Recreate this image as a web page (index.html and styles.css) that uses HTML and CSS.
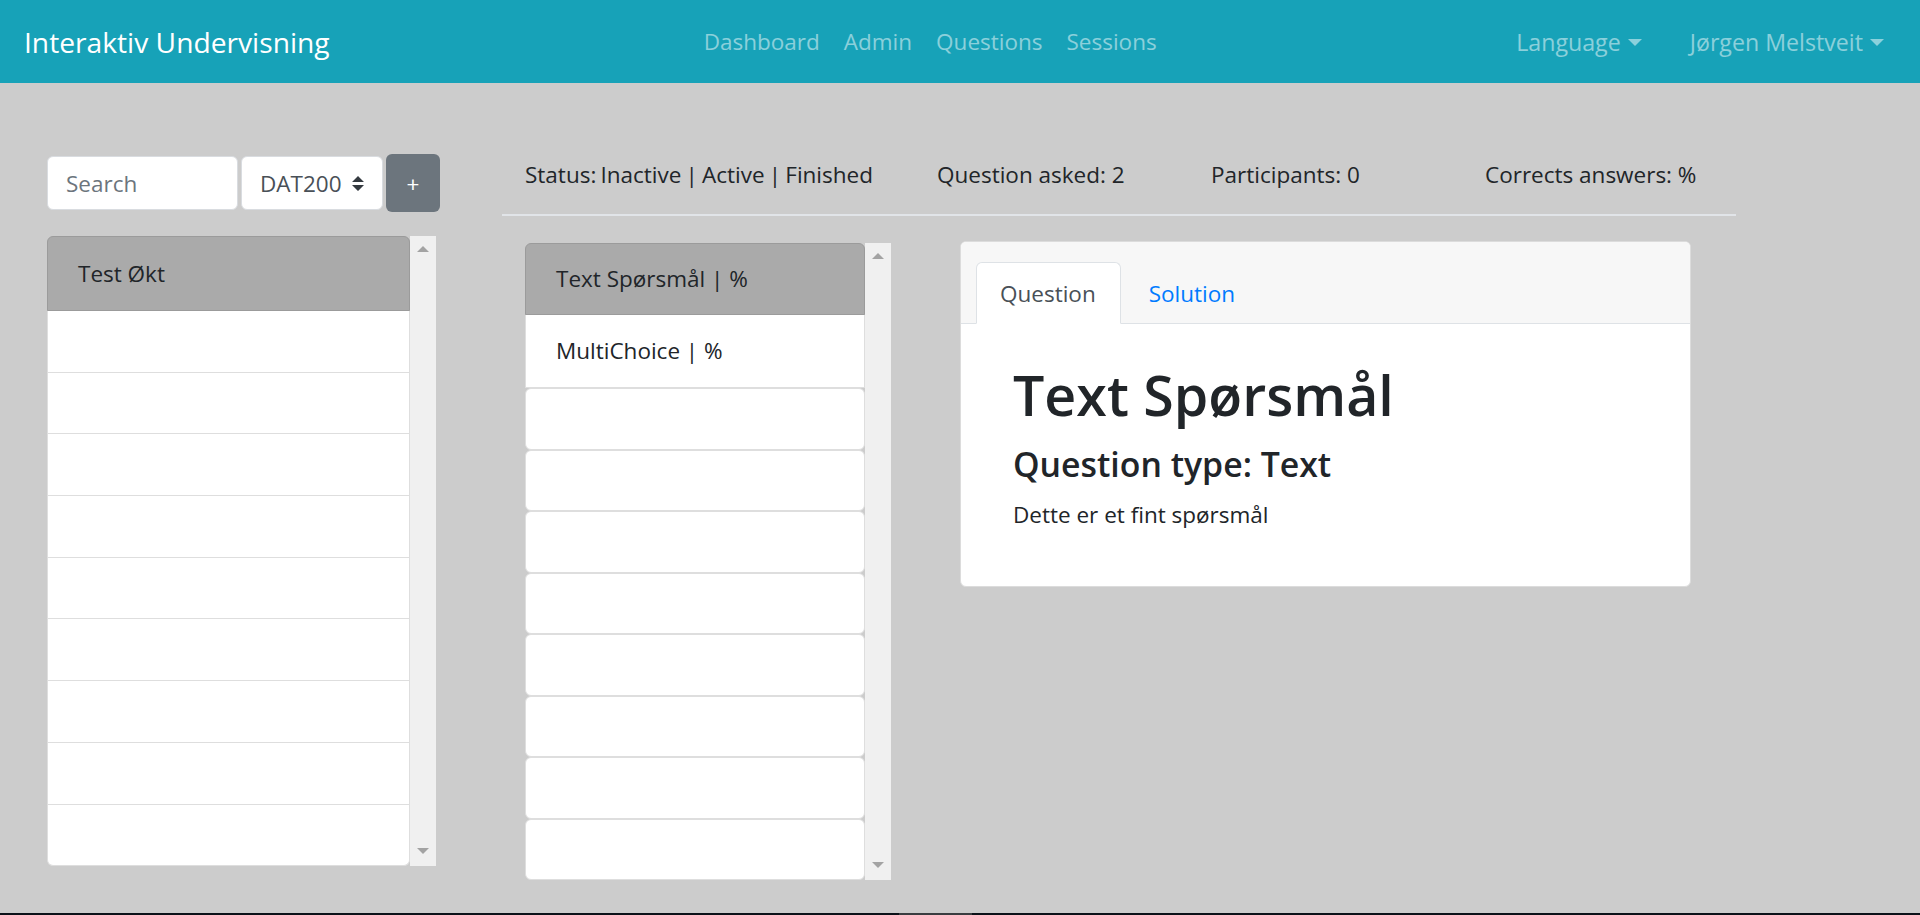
FILE: index.html
```html
<!DOCTYPE html>
<html lang="no">
<head>
<meta charset="utf-8">
<title>Interaktiv Undervisning</title>
<link rel="stylesheet" href="styles.css">
</head>
<body>
<nav class="navbar">
  <a class="brand" href="#">Interaktiv Undervisning</a>
  <ul class="nav nav-center">
    <li><a class="nav-link" href="#">Dashboard</a></li>
    <li><a class="nav-link" href="#">Admin</a></li>
    <li><a class="nav-link" href="#">Questions</a></li>
    <li><a class="nav-link" href="#">Sessions</a></li>
  </ul>
  <ul class="nav nav-right">
    <li><a class="nav-link dropdown" href="#">Language</a></li>
    <li><a class="nav-link dropdown" href="#">Jørgen Melstveit</a></li>
  </ul>
</nav>

<main class="main">
  <section class="sidebar">
    <div class="toolbar">
      <div class="input">Search</div>
      <div class="select">
        <span>DAT200</span>
        <svg class="select-arrow" viewBox="0 0 4 5" width="12" height="15"><path d="M2 0L0 2h4zm0 5L0 3h4z" fill="#343a40"/></svg>
      </div>
      <button class="btn-add">+</button>
    </div>
    <div class="listbox">
      <div class="list">
        <div class="item text active">Test Økt</div>
        <div class="item"></div>
        <div class="item"></div>
        <div class="item"></div>
        <div class="item"></div>
        <div class="item"></div>
        <div class="item"></div>
        <div class="item"></div>
        <div class="item"></div>
        <div class="item last"></div>
      </div>
      <div class="scrollbar">
        <span class="arrow up"></span>
        <span class="arrow down"></span>
      </div>
    </div>
  </section>

  <section class="content">
    <div class="stats">
      <div class="stat s1">Status: Inactive | Active | Finished</div>
      <div class="stat s2">Question asked: 2</div>
      <div class="stat s3">Participants: 0</div>
      <div class="stat s4">Corrects answers: %</div>
    </div>
    <div class="divider"></div>
    <div class="content-row">
      <div class="listbox qlist">
        <div class="list">
          <div class="item text active">Text Spørsmål | %</div>
          <div class="item text">MultiChoice | %</div>
          <div class="item sep"></div>
          <div class="item sep"></div>
          <div class="item sep"></div>
          <div class="item sep"></div>
          <div class="item sep"></div>
          <div class="item sep"></div>
          <div class="item sep"></div>
          <div class="item sep last"></div>
        </div>
        <div class="scrollbar">
          <span class="arrow up"></span>
          <span class="arrow down"></span>
        </div>
      </div>
      <div class="card">
        <div class="card-header">
          <a class="tab active" href="#">Question</a>
          <a class="tab" href="#">Solution</a>
        </div>
        <div class="card-body">
          <h1 class="q-title">Text Spørsmål</h1>
          <h4 class="q-type">Question type: Text</h4>
          <p class="q-text">Dette er et fint spørsmål</p>
        </div>
      </div>
    </div>
  </section>
</main>
<div class="taskbar"><div class="taskbar-thumb"></div></div>
</body>
</html>
```
FILE: styles.css
```css
* { box-sizing: border-box; }
html, body { margin: 0; padding: 0; }
body {
  width: 1920px;
  height: 915px;
  overflow: hidden;
  background: #cccccc;
  font-family: "Open Sans", "Noto Sans", sans-serif;
  font-size: 22.5px;
  color: #212529;
  display: flex;
  flex-direction: column;
}
a { text-decoration: none; }

/* navbar */
.navbar {
  height: 83px;
  flex: none;
  background: #17a2b8;
  display: flex;
  align-items: center;
  padding: 0 24px;
}
.brand {
  color: #fff;
  font-size: 28.2px;
  line-height: 36px;
}
.nav {
  list-style: none;
  margin: 0;
  padding: 0;
  display: flex;
}
.nav-center { margin-left: 362px; }
.nav-right { margin-left: auto; }
.nav-link {
  display: block;
  padding: 12px;
  color: rgba(255, 255, 255, 0.5);
  font-size: 22.5px;
  line-height: 36px;
}
.nav-right .nav-link { font-size: 23.2px; }
.nav-right li + li { margin-left: 24px; }
.dropdown::after {
  content: "";
  display: inline-block;
  margin-left: 7px;
  vertical-align: 5px;
  border-top: 7px solid rgba(255, 255, 255, 0.5);
  border-left: 7px solid transparent;
  border-right: 7px solid transparent;
}

/* main */
.main {
  flex: 1;
  display: flex;
  padding: 71px 0 0 47px;
}
.sidebar {
  width: 393px;
  flex: none;
}
.toolbar {
  display: flex;
  align-items: center;
  height: 58px;
}
.input, .select {
  height: 54px;
  background: #fff;
  border: 1.5px solid #d9dce0;
  border-radius: 6px;
  display: flex;
  align-items: center;
  padding: 0 18px;
  font-size: 22.5px;
}
.input {
  width: 191px;
  color: #6c757d;
}
.select {
  width: 142px;
  margin-left: 3px;
  justify-content: space-between;
  color: #495057;
}
.btn-add {
  width: 54px;
  height: 58px;
  margin-left: 3px;
  background: #6c757d;
  border: none;
  border-radius: 6px;
  color: #fff;
  font-family: inherit;
  font-size: 22.5px;
  padding: 0;
}

.listbox {
  display: flex;
  margin-top: 24px;
  height: 630px;
  width: 389px;
}
.list {
  flex: 1;
  display: flex;
  flex-direction: column;
}
.item {
  height: 61.7px;
  flex: none;
  background: #fff;
  border: 1.5px solid #dedede;
  border-top: none;
}
.item.text {
  height: 75px;
  display: flex;
  align-items: center;
  padding-left: 30px;
  font-size: 22.5px;
}
.item.active {
  background: #aaaaaa;
  border: 1.5px solid #9b9b9b;
  border-radius: 6px 6px 0 0;
}
.item.last { border-radius: 0 0 6px 6px; }
.item.sep {
  height: 61.5px;
  border-top: 1.5px solid #dedede;
  border-radius: 6px;
}
.scrollbar {
  width: 26px;
  flex: none;
  background: #f0f0f0;
  display: flex;
  flex-direction: column;
  justify-content: space-between;
  align-items: center;
  padding: 10px 0 12px;
}
.arrow {
  width: 0;
  height: 0;
  border-left: 6px solid transparent;
  border-right: 6px solid transparent;
}
.arrow.up { border-bottom: 6px solid #a3a3a3; }
.arrow.down { border-top: 6px solid #a3a3a3; }

/* content */
.content {
  margin-left: 62px;
  width: 1234px;
  flex: none;
}
.stats {
  display: flex;
  height: 38px;
  margin-top: 1px;
  align-items: center;
  padding-left: 23px;
  font-size: 22.5px;
}
.stat { white-space: nowrap; }
.s1 { width: 412px; word-spacing: -1.7px; }
.s2 { width: 274px; }
.s3 { width: 274px; }
.divider {
  height: 2px;
  margin-top: 21px;
  background: #e1e4e8;
}
.content-row {
  display: flex;
  align-items: flex-start;
  padding-left: 23px;
  margin-top: 25px;
}
.qlist {
  margin-top: 1.5px;
  width: 366px;
  height: 637px;
}
.qlist .item.text:first-child { height: 72px; }
.qlist .item.text { height: 73.5px; }
.card {
  margin-left: 69px;
  width: 731px;
  background: #fff;
  border: 1.5px solid #dcdcdc;
  border-radius: 6px;
  overflow: hidden;
}
.card-header {
  background: #f7f7f7;
  height: 81.5px;
  display: flex;
  align-items: flex-end;
  padding-left: 15px;
  border-bottom: 1.5px solid #dee2e6;
}
.tab {
  display: block;
  height: 62px;
  padding: 12px 24px 12px 23px;
  line-height: 38px;
  font-size: 22.5px;
  color: #007bff;
  margin-bottom: -1.5px;
  border: 1.5px solid transparent;
  border-radius: 6px 6px 0 0;
}
.tab + .tab { padding-left: 27px; }
.tab.active {
  background: #fff;
  color: #495057;
  border-color: #dee2e6 #dee2e6 #fff;
}
.card-body {
  padding: 35px 52px 29px;
}
.q-title {
  margin: 0 0 12px;
  font-size: 55.5px;
  line-height: 72px;
  font-weight: 600;
}
.q-type {
  margin: 0 0 11px;
  font-size: 33.8px;
  line-height: 43px;
  font-weight: 600;
}
.q-text {
  margin: 0 0 24px;
  line-height: 36px;
}

.taskbar {
  height: 2px;
  flex: none;
  background: #0b1118;
}
.taskbar-thumb {
  margin-left: 899px;
  width: 73px;
  height: 2px;
  background: #3a3d40;
}
```
